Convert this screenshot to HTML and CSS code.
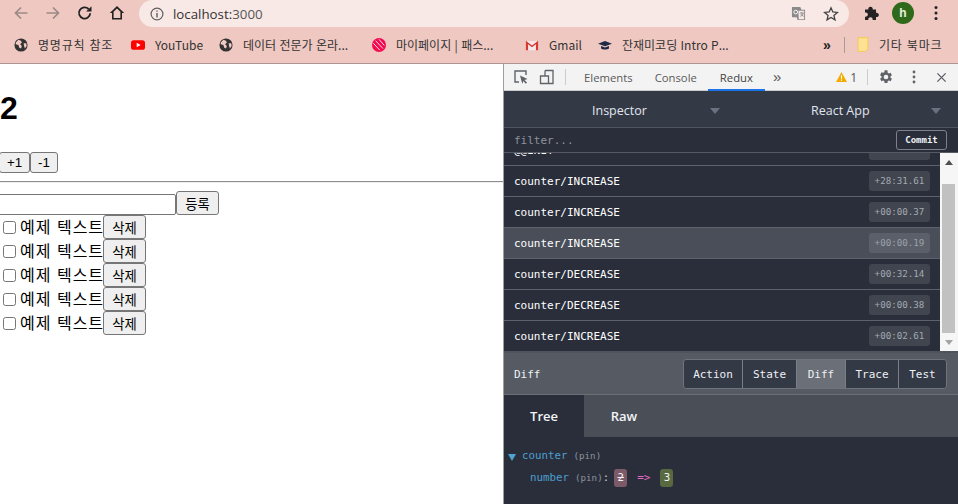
FILE: index.html
```html
<!DOCTYPE html>
<html lang="ko">
<head>
<meta charset="utf-8">
<title>React App</title>
<link rel="stylesheet" href="styles.css">
</head>
<body>
<div class="browser">
  <header class="toolbar">
    <div class="nav">
      <svg class="nav-icon" viewBox="0 0 16 16"><path d="M14.5 8H2.5M8 2.5 2.5 8 8 13.5" fill="none" stroke="#9a8a88" stroke-width="1.7"/></svg>
      <svg class="nav-icon" viewBox="0 0 16 16"><path d="M1.5 8H13.5M8 2.5 13.5 8 8 13.5" fill="none" stroke="#9a8a88" stroke-width="1.7"/></svg>
      <svg class="nav-icon" viewBox="0 0 16 16"><path d="M13.2 8.2A5.6 5.6 0 1 1 11.6 4" fill="none" stroke="#222" stroke-width="1.8"/><path d="M14.5 1.2V6.6H9.1Z" fill="#222"/></svg>
      <svg class="nav-icon" viewBox="0 0 16 16"><path d="M8 1 .8 8H3v6.6h10V8h2.2ZM4.6 13V6.8L8 3.4l3.4 3.4V13Z" fill="#222"/></svg>
    </div>
    <div class="omnibox">
      <svg class="info" viewBox="0 0 14 14"><circle cx="7" cy="7" r="5.9" fill="none" stroke="#5f5f5f" stroke-width="1.2"/><path d="M6.3 3.4h1.4v1.4H6.3ZM6.3 6h1.4v4.6H6.3Z" fill="#5f5f5f"/></svg>
      <span class="url">localhost:<span class="port">3000</span></span>
      <svg class="translate" viewBox="0 0 16 16"><path d="M1 1h9l1 3h4v11H7l-1-3H1Z" fill="#8a8a8a"/><path d="M8 5h6v9H8.200Z" fill="#f8e9e7"/><circle cx="5" cy="6.500" r="2" fill="none" stroke="#fff"/><path d="M9.500 7.500h4M11.500 6.500v1M10 11c2-1 3-2 3-3.500M10.500 8.500c.5 1 1.500 2 3 2.500" fill="none" stroke="#777" stroke-width=".8"/></svg>
      <svg class="star" viewBox="0 0 16 16"><path d="M8 1.800 9.800 6l4.600.4-3.500 3 1.100 4.500L8 11.500 4 13.900l1.100-4.500-3.500-3L6.200 6Z" fill="none" stroke="#444" stroke-width="1.300"/></svg>
    </div>
    <svg class="puzzle" viewBox="0 0 16 16"><path d="M1 4.500h3.400a2.200 2.200 0 1 1 4.200 0H12v3.300a2.200 2.200 0 1 1 0 4.200V15H8.600a2.200 2.200 0 1 0-4.200 0H1v-3.300a2.200 2.200 0 1 0 0-4.200Z" fill="#222"/></svg>
    <span class="avatar">h</span>
    <svg class="kebab" viewBox="0 0 4 16"><circle cx="2" cy="2.500" r="1.500"/><circle cx="2" cy="8" r="1.500"/><circle cx="2" cy="13.500" r="1.500"/></svg>
  </header>
  <nav class="bookmarks">
    <a class="bm bm-1"><svg class="bm-icon" viewBox="0 0 16 16"><circle cx="8" cy="8" r="7.500" fill="#333"/><path d="M2 5l3-3 3 1 1 2-2 2 2 2-1 3-2-1-1-3-3-1ZM11 6l3 0 .5 3-2 3-1-3Z" fill="#f0c9c3"/></svg><span class="bm-label-wide">명명규칙 참조</span></a>
    <a class="bm bm-2"><svg class="bm-icon" viewBox="0 0 16 16"><rect y="2.500" width="16" height="11" rx="3" fill="#f00"/><path d="M6.500 5.500v5L11 8Z" fill="#fff"/></svg>YouTube</a>
    <a class="bm bm-3"><svg class="bm-icon" viewBox="0 0 16 16"><circle cx="8" cy="8" r="7.500" fill="#333"/><path d="M2 5l3-3 3 1 1 2-2 2 2 2-1 3-2-1-1-3-3-1ZM11 6l3 0 .5 3-2 3-1-3Z" fill="#f0c9c3"/></svg>데이터 전문가 온라...</a>
    <a class="bm bm-4"><svg class="bm-icon" viewBox="0 0 16 16"><circle cx="8" cy="8" r="8" fill="#f5094e"/><path d="M1.500 6 9 14M4 3l8.500 9M8 1.500l6 7" stroke="#fff" stroke-width="1" fill="none"/></svg>마이페이지 | 패스...</a>
    <a class="bm bm-5"><svg class="bm-icon" viewBox="0 0 16 16"><path d="M1 3.500h14v10.500H1Z" fill="#f3e9e8"/><path d="M1 14V3l7 5.500L15 3v11h-2.500V7L8 10.500 3.500 7v7Z" fill="#d93a30"/></svg>Gmail</a>
    <a class="bm bm-6"><svg class="bm-icon" viewBox="0 0 16 16"><path d="M0 6.500 8 3.500l8 3-8 3Z" fill="#1f2a44"/><path d="M3.500 9v3c2 1.500 7 1.500 9 0V9L8 10.800Z" fill="#1f2a44"/></svg>잔재미코딩 Intro P...</a>
    <span class="bm-more">»</span>
    <span class="bm-sep"></span>
    <a class="bm bm-folder"><svg class="bm-icon" viewBox="0 0 12 16"><path d="M.700.700h10.600v12l-2.500 2.600H.700Z" fill="#fde293" stroke="#f2c94c"/></svg><span class="bm-label-wide">기타 북마크</span></a>
  </nav>
  <main class="main">
    <section class="page">
      <h1 class="count">2</h1>
      <div class="counter-buttons"><button class="btn btn-plus">+1</button><button class="btn btn-minus">-1</button></div>
      <hr class="rule">
      <form class="add-form"><input class="text-input" type="text"><button class="btn btn-ko" type="button">등록</button></form>
      <ul class="todos">
        <li class="todo"><input class="check" type="checkbox"><span class="todo-text">예제 텍스트</span><button class="btn btn-ko">삭제</button></li>
        <li class="todo"><input class="check" type="checkbox"><span class="todo-text">예제 텍스트</span><button class="btn btn-ko">삭제</button></li>
        <li class="todo"><input class="check" type="checkbox"><span class="todo-text">예제 텍스트</span><button class="btn btn-ko">삭제</button></li>
        <li class="todo"><input class="check" type="checkbox"><span class="todo-text">예제 텍스트</span><button class="btn btn-ko">삭제</button></li>
        <li class="todo"><input class="check" type="checkbox"><span class="todo-text">예제 텍스트</span><button class="btn btn-ko">삭제</button></li>
      </ul>
    </section>
    <aside class="devtools">
      <div class="dt-tabs">
        <svg class="dt-icon dt-inspect" viewBox="0 0 16 16"><path d="M6 13H2V2h11v4" fill="none" stroke="#5f6368" stroke-width="1.400"/><path d="M7 6.500 14.500 10l-3 1 2.500 2.500-1.200 1.200L10.300 12l-1 3Z" fill="#5f6368"/></svg>
        <svg class="dt-icon dt-device" viewBox="0 0 16 16"><path d="M6 1.500h8v13H1.500V7H9.500v7.500M6 1.500V7" fill="none" stroke="#5f6368" stroke-width="1.300"/></svg>
        <span class="dt-sep"></span>
        <span class="dt-tab">Elements</span>
        <span class="dt-tab">Console</span>
        <span class="dt-tab dt-tab-active">Redux</span>
        <span class="dt-more">»</span>
        <span class="dt-warn"><svg class="warn-icon" viewBox="0 0 12 11"><path d="M6 0 12 11H0Z" fill="#f2ab00"/><path d="M5.400 3.500h1.200v4H5.400ZM5.400 8.300h1.200v1.200H5.400Z" fill="#fff"/></svg>1</span>
        <span class="dt-sep dt-sep-right"></span>
        <svg class="dt-gear" viewBox="0 0 24 24"><path d="M19.400 13a7.500 7.500 0 0 0 0-2l2.200-1.700-2.100-3.600-2.600 1a7.500 7.500 0 0 0-1.700-1L14.800 2h-4.200l-.4 2.700a7.500 7.500 0 0 0-1.700 1l-2.600-1L3.800 9.300 6 11a7.500 7.500 0 0 0 0 2l-2.200 1.700 2.100 3.600 2.600-1c.5.400 1.100.7 1.700 1l.4 2.700h4.200l.4-2.700c.6-.3 1.200-.6 1.700-1l2.600 1 2.100-3.600ZM12.700 15.500a3.500 3.500 0 1 1 0-7 3.500 3.500 0 0 1 0 7Z" transform="translate(-.7 0)" fill="#5f6368"/></svg>
        <svg class="dt-kebab" viewBox="0 0 4 14"><circle cx="2" cy="2" r="1.400"/><circle cx="2" cy="7" r="1.400"/><circle cx="2" cy="12" r="1.400"/></svg>
        <svg class="dt-close" viewBox="0 0 12 12"><path d="M1.500 1.500l9 9M10.500 1.500l-9 9" stroke="#5f6368" stroke-width="1.500"/></svg>
      </div>
      <div class="rd-header">
        <div class="rd-select"><span class="rd-select-label">Inspector</span><span class="caret"></span></div>
        <div class="rd-select rd-select-app"><span class="rd-select-label">React App</span><span class="caret"></span></div>
      </div>
      <div class="rd-filter"><span class="filter-text">filter...</span><button class="commit">Commit</button></div>
      <div class="rd-list-wrap">
        <ul class="rd-list">
          <li class="action"><span>@@INIT</span><span class="time"></span></li>
          <li class="action"><span>counter/INCREASE</span><span class="time">+28:31.61</span></li>
          <li class="action"><span>counter/INCREASE</span><span class="time">+00:00.37</span></li>
          <li class="action action-selected"><span>counter/INCREASE</span><span class="time">+00:00.19</span></li>
          <li class="action"><span>counter/DECREASE</span><span class="time">+00:32.14</span></li>
          <li class="action"><span>counter/DECREASE</span><span class="time">+00:00.38</span></li>
          <li class="action"><span>counter/INCREASE</span><span class="time">+00:02.61</span></li>
        </ul>
        <div class="scrollbar">
          <span class="sb-arrow sb-up"></span>
          <span class="sb-thumb"></span>
          <span class="sb-arrow sb-down"></span>
        </div>
      </div>
      <div class="rd-detail">
        <span class="detail-title">Diff</span>
        <div class="seg">
          <span class="seg-item seg-action">Action</span>
          <span class="seg-item seg-state">State</span>
          <span class="seg-item seg-diff seg-active">Diff</span>
          <span class="seg-item seg-trace">Trace</span>
          <span class="seg-item seg-test">Test</span>
        </div>
      </div>
      <div class="rd-view-tabs"><span class="view-tab view-tab-active">Tree</span><span class="view-tab">Raw</span></div>
      <div class="rd-tree">
        <div class="tree-row"><span class="tree-arrow"></span><span class="tree-key">counter</span> <span class="pin">(pin)</span></div>
        <div class="tree-row tree-child"><span class="tree-key">number</span> <span class="pin">(pin)</span><span class="colon">:</span> <span class="val val-old">2</span> <span class="diff-arrow">=&gt;</span> <span class="val val-new">3</span></div>
      </div>
    </aside>
  </main>
</div>
</body>
</html>
```
FILE: styles.css
```css
* { box-sizing: border-box; }
html, body { margin: 0; padding: 0; height: 100%; overflow: hidden; }
body { font-family: "Liberation Sans", "Noto Sans CJK KR", sans-serif; background: #fff; }
.browser { display: flex; flex-direction: column; width: 958px; height: 504px; }

.toolbar { display: flex; align-items: center; height: 28px; padding-bottom: 2px; background: #efc8c2; flex: none; }
.nav { display: flex; align-items: center; width: 139px; padding-left: 13px; gap: 16px; height: 26px; }
.nav-icon { width: 16px; height: 16px; flex: none; }
.omnibox { display: flex; align-items: center; width: 710px; height: 27px; background: #f8e9e7; border-radius: 14px; padding-left: 11px; align-self: flex-start; }
.info { width: 14px; height: 14px; flex: none; }
.url { margin-left: 9px; font: 13.300px "Open Sans", sans-serif; color: #333; flex: 1; }
.port { color: #555; }
.translate { width: 15px; height: 15px; margin-right: 17px; }
.star { width: 16px; height: 16px; margin-right: 10px; }
.puzzle { width: 16px; height: 16px; margin-left: 15px; }
.avatar { width: 22px; height: 22px; margin-left: 12px; border-radius: 50%; background: #2f6a1b; color: #e8f0e0; font: bold 12px/22px "Liberation Sans", sans-serif; text-align: center; }
.kebab { width: 4px; height: 16px; margin-left: 20px; fill: #222; }

.bookmarks { display: flex; align-items: center; height: 36px; padding: 0 0 2px 14px; background: #efc8c2; border-bottom: 1px solid #ae9490; flex: none; font: 12px "Noto Sans CJK KR", sans-serif; color: #333; }
.bm { display: flex; align-items: center; gap: 10px; white-space: nowrap; flex: none; font-size: 12px; }
.bm-label-wide { letter-spacing: .8px; }
.bm-icon { width: 14px; height: 14px; flex: none; }
.bm-1 { width: 117px; }
.bm-2 { width: 88px; }
.bm-3 { width: 153px; }
.bm-4 { width: 153px; }
.bm-5 { width: 73px; }
.bm-6 { width: 225px; }
.bm-more { font: bold 14px/14px "Liberation Sans", sans-serif; color: #222; width: 21px; }
.bm-sep { width: 1px; height: 16px; background: #a89a96; margin-right: 12px; }
.bm-folder .bm-icon { width: 12px; height: 15px; }
.bm-folder { gap: 10px; }

.main { flex: 1; display: flex; min-height: 0; }
.page { width: 504px; flex: none; border-right: 1px solid #9e9e9e; overflow: hidden; }
.count { margin: 26px 0 0; font: bold 32px/37px "Liberation Sans", sans-serif; color: #000; }
.counter-buttons { display: flex; margin-top: 25px; }
.btn { height: 21px; padding: 0; font: 13.330px "Liberation Sans", sans-serif; color: #000; background: #efefef; border: 1px solid #767676; border-radius: 3px; }
.btn-plus { width: 31px; margin-left: -1px; }
.btn-minus { width: 28px; }
.btn-ko { height: 24px; width: 43px; font-family: "Noto Sans CJK KR", sans-serif; }
.rule { margin: 8px 0 0; height: 2px; border: 0; border-top: 1px solid #8f8f8f; border-bottom: 1px solid #eee; }
.add-form { display: flex; align-items: flex-end; margin-top: 8px; }
.text-input { width: 177px; height: 21px; margin: 0 0 0 -1px; padding: 0; border: 1px solid #767676; border-radius: 0 2px 2px 0; background: #fff; }
.todos { list-style: none; margin: 0; padding: 0; }
.todo { display: flex; align-items: center; height: 24px; }
.check { width: 13px; height: 13px; margin: 0 4px 0 3px; flex: none; }
.todo-text { width: 83px; margin-top: -3px; font: 16px/22px "Noto Sans CJK KR", sans-serif; letter-spacing: 1px; color: #000; white-space: nowrap; }

.devtools { flex: 1; min-width: 0; display: flex; flex-direction: column; font-family: "Open Sans", sans-serif; background: #2a2e3a; }
.dt-tabs { display: flex; align-items: center; height: 27px; background: #f3f3f3; border-bottom: 1px solid #ccc; padding-left: 9px; flex: none; color: #5a5a5a; font-size: 12px; }
.dt-icon { width: 16px; height: 16px; flex: none; }
.dt-device { margin-left: 10px; }
.dt-sep { width: 1px; height: 16px; background: #ccc; margin: 0 7px 0 10px; }
.dt-tab { padding: 0 11px; height: 27px; line-height: 28px; white-space: nowrap; font-size: 11.300px; }
.dt-tab-active { color: #444; padding: 0 12px; border-bottom: 2px solid #1a73e8; }
.dt-more { margin-left: 8px; font: 15px/24px "Liberation Sans", sans-serif; color: #555; }
.dt-warn { display: flex; align-items: center; gap: 3px; margin-left: auto; font-size: 12px; color: #555; }
.warn-icon { width: 11px; height: 10px; }
.dt-sep-right { margin: 0 11px 0 10px; }
.dt-gear { width: 16px; height: 16px; margin: 0 -1px; flex: none; }
.dt-kebab { width: 4px; height: 14px; margin-left: 19px; fill: #5f6368; }
.dt-close { width: 11px; height: 11px; margin-left: 20px; margin-right: 11px; }

.rd-header { display: flex; height: 37px; padding-top: 3px; background: #343946; border-bottom: 1px solid #4f5460; flex: none; }
.rd-select { display: flex; align-items: center; width: 216px; padding: 0 0 0 88px; color: #e0e6ee; font-size: 12.500px; white-space: nowrap; }
.rd-select-app { width: 221px; padding-left: 91px; }
.rd-select-label { flex: 1; }
.caret { width: 0; height: 0; border: 5.500px solid transparent; border-top: 6px solid #6a7180; border-bottom: 0; }
.rd-filter { display: flex; align-items: center; justify-content: space-between; height: 25px; padding: 0 11px 0 10px; background: #2a2e3a; border-bottom: 1px solid #555a65; flex: none; }
.filter-text { font: 11px "DejaVu Sans Mono", monospace; color: #8d929c; }
.commit { width: 51px; height: 20px; padding: 0; font: bold 9px "DejaVu Sans Mono", monospace; color: #eef1f5; background: transparent; border: 1px solid #7d818a; border-radius: 3px; }

.rd-list-wrap { display: flex; height: 200px; flex: none; overflow: hidden; border-bottom: 2px solid #4f535c; }
.rd-list { flex: 1; list-style: none; margin: -18px 0 0; padding: 0; min-width: 0; }
.action { display: flex; align-items: center; justify-content: space-between; height: 31px; padding: 0 10px 0 10px; border-bottom: 1px solid #5c616b; font: 11px "DejaVu Sans Mono", monospace; color: #fff; }
.action-selected { background: #4a4e58; }
.time { width: 61px; height: 20px; border-radius: 3px; background: #41454f; color: #a5a9b1; font: 9.200px/20px "DejaVu Sans Mono", monospace; text-align: center; }
.action-selected .time { background: #5b5f69; color: #9da1a9; }
.scrollbar { width: 18px; flex: none; display: flex; flex-direction: column; align-items: center; padding-right: 1px; background: #f6f6f6; }
.sb-arrow { width: 0; height: 0; border: 4px solid transparent; flex: none; }
.sb-up { border-bottom: 5px solid #505050; border-top: 0; margin-top: 7px; }
.sb-thumb { width: 13px; height: 149px; margin-top: 19px; background: #c1c1c1; flex: none; }
.sb-down { border-top: 5px solid #a3a3a3; border-bottom: 0; margin-top: 7px; }

.rd-detail { display: flex; align-items: center; justify-content: space-between; height: 42px; padding: 1px 11px 0 10px; background: #565a62; border-bottom: 1px solid #6b6f77; flex: none; font: 11px "DejaVu Sans Mono", monospace; color: #eef1f5; }
.seg { display: flex; height: 30px; border: 1px solid #6f737b; border-radius: 3px; background: #343946; overflow: hidden; }
.seg-item { display: flex; align-items: center; justify-content: center; border-right: 1px solid #7a7e86; }
.seg-item:last-child { border-right: 0; }
.seg-action { width: 59px; }
.seg-state { width: 54px; }
.seg-diff { width: 49px; }
.seg-trace { width: 53px; }
.seg-test { width: 47px; }
.seg-active { background: #6b6f77; }

.rd-view-tabs { display: flex; height: 42px; background: #4a4e56; flex: none; color: #f2f4f7; font-size: 13px; font-weight: 600; }
.view-tab { width: 80px; display: flex; align-items: center; justify-content: center; }
.view-tab-active { background: #2a2e3a; }

.rd-tree { flex: 1; padding: 8px 0 0 4px; background: #2a2e3a; font: 10.800px/22px "DejaVu Sans Mono", monospace; }
.tree-row { display: flex; align-items: center; gap: 6px; height: 22px; white-space: nowrap; }
.tree-arrow { width: 0; height: 0; border: 4px solid transparent; border-top: 7px solid #4fa3d1; border-bottom: 0; margin-top: 3px; }
.tree-key { color: #4a9fd0; }
.pin { color: #8d939d; font-size: 9.200px; }
.tree-child { padding-left: 22px; gap: 0; }
.tree-child .pin { margin-left: 6px; }
.colon { color: #c8ccd2; margin-right: 5px; }
.val { display: inline-block; width: 13px; height: 18px; line-height: 18px; border-radius: 3px; text-align: center; color: #eef1f5; }
.val-old { background: #7d5a67; text-decoration: line-through; }
.val-new { background: #58693f; }
.diff-arrow { color: #e06ac4; margin: 0 10px; font-size: 11px; }
```
